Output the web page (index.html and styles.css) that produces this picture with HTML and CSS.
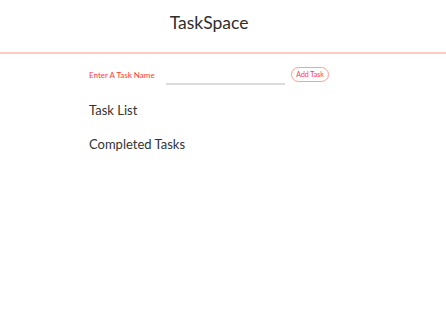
FILE: index.html
```html
<!DOCTYPE html>
<html lang="en">
<head>
<meta charset="utf-8">
<title>TaskSpace</title>
<link rel="stylesheet" href="styles.css">
</head>
<body>
<header class="header">
  <div class="wrap">
    <h1 class="title">TaskSpace</h1>
  </div>
</header>
<main class="wrap">
  <form class="add-row">
    <label class="add-label" for="task">Enter A Task Name</label>
    <input class="add-input" id="task" type="text">
    <button class="add-btn" type="button">Add Task</button>
  </form>
  <h2 class="section">Task List</h2>
  <h2 class="section section-done">Completed Tasks</h2>
</main>
</body>
</html>
```
FILE: styles.css
```css
html, body {
  margin: 0;
  padding: 0;
  background: #ffffff;
}
body {
  font-family: Lato, "Open Sans", sans-serif;
  color: #333333;
}
.wrap {
  width: 240px;
  margin-left: 89px;
}
.header {
  height: 52px;
  border-bottom: 2px solid #ffc8c8;
  box-sizing: content-box;
}
.title {
  margin: 0;
  padding-top: 13px;
  font-size: 17.5px;
  line-height: 20px;
  font-weight: 400;
  text-align: center;
  color: #2e2e2e;
}
.add-row {
  display: flex;
  align-items: flex-start;
  margin: 13px 0 0 0;
}
.add-label {
  flex: 0 0 67px;
  white-space: nowrap;
  margin-top: 3px;
  font-size: 8px;
  line-height: 11px;
  color: #ff3b3b;
}
.add-input {
  flex: 0 0 119px;
  margin: 2px 0 0 10px;
  width: 119px;
  height: 16px;
  padding: 0;
  box-sizing: border-box;
  border: none;
  border-bottom: 2px solid #dcdcdc;
  outline: none;
  background: transparent;
}
.add-btn {
  flex: 0 0 38px;
  margin-left: 6px;
  width: 38px;
  height: 15px;
  padding: 0;
  box-sizing: border-box;
  border: 1px solid #ff9c9c;
  border-radius: 8px;
  background: #ffffff;
  color: #ff3b3b;
  font-family: Lato, "Open Sans", sans-serif;
  font-size: 7px;
  line-height: 13px;
}
.section {
  margin: 17px 0 0 0;
  font-size: 13px;
  line-height: 16px;
  font-weight: 400;
  color: #333333;
}
.section-done {
  margin-top: 18px;
}
```
